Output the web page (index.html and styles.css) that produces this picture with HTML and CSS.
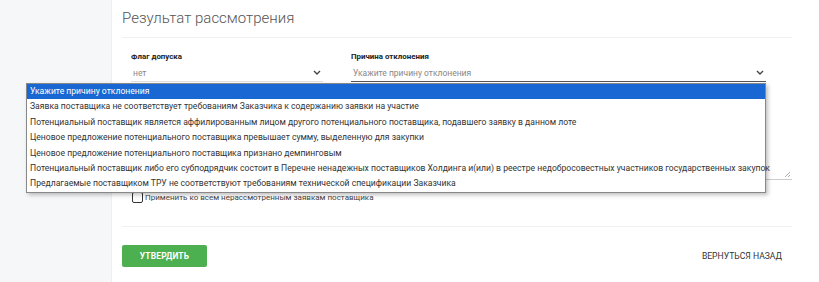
FILE: index.html
```html
<!DOCTYPE html>
<html lang="ru">
<head>
    <meta charset="UTF-8">
    <title>Результат рассмотрения</title>
    <link rel="stylesheet" href="styles.css">
</head>
<body>
<div class="layout">
    <aside class="sidebar"></aside>

    <main class="card">
        <h2 class="card-title">Результат рассмотрения</h2>

        <!-- Форма результата -->
        <div class="form-grid">
            <div class="field">
                <label class="field-label">Флаг допуска</label>
                <div class="select-box">
                    <span class="select-value">нет</span>
                    <svg class="chevron" width="8" height="5" viewBox="0 0 8 5"><path d="M1 1l3 3 3-3" fill="none" stroke="#444" stroke-width="1.4"/></svg>
                </div>
            </div>
            <div class="field">
                <label class="field-label">Причина отклонения</label>
                <div class="select-box select-active">
                    <span class="select-value">Укажите причину отклонения</span>
                    <svg class="chevron" width="8" height="5" viewBox="0 0 8 5"><path d="M1 1l3 3 3-3" fill="none" stroke="#444" stroke-width="1.4"/></svg>
                </div>
                <label class="field-label comment-label">Комментарий</label>
                <div class="textarea-box">
                    <svg class="resize" width="7" height="7" viewBox="0 0 7 7"><path d="M1 6L6 1M4 6L6 4" stroke="#999" stroke-width="0.8"/></svg>
                </div>
            </div>
        </div>

        <label class="check-row">
            <span class="checkbox"></span>
            Применить ко всем нерассмотренным заявкам поставщика
        </label>

        <div class="actions">
            <button class="btn-approve">УТВЕРДИТЬ</button>
            <a class="btn-back" href="#">ВЕРНУТЬСЯ НАЗАД</a>
        </div>
    </main>
</div>

<!-- Открытый список причин -->
<ul class="dropdown">
    <li class="selected">Укажите причину отклонения</li>
    <li>Заявка поставщика не соответствует требованиям Заказчика к содержанию заявки на участие</li>
    <li>Потенциальный поставщик является аффилированным лицом другого потенциального поставщика, подавшего заявку в данном лоте</li>
    <li>Ценовое предложение потенциального поставщика превышает сумму, выделенную для закупки</li>
    <li>Ценовое предложение потенциального поставщика признано демпинговым</li>
    <li>Потенциальный поставщик либо его субподрядчик состоит в Перечне ненадежных поставщиков Холдинга и(или) в реестре недобросовестных участников государственных закупок</li>
    <li>Предлагаемые поставщиком ТРУ не соответствуют требованиям технической спецификации Заказчика</li>
</ul>
</body>
</html>
```

FILE: styles.css
```css
body { margin: 0; font-family: Roboto, "Liberation Sans", sans-serif; background: #fff; color: #333; }
.layout { display: flex; min-height: 282px; }
.sidebar { width: 111px; background: #f6f7f9; flex-shrink: 0; }
.card { flex: 1; border-left: 1px solid #eceef0; padding: 0 27px 0 10px; background: #fff; }
.card-title { font-size: 15px; font-weight: 300; color: #555; margin: 0; padding: 7px 0 8px; line-height: 22px; border-bottom: 1px solid #f0f0f0; }

.form-grid { display: grid; grid-template-columns: 192px 441px; column-gap: 28px; padding: 12px 0 0 9px; }
.field-label { display: block; font-size: 7.9px; font-weight: 700; color: #222; height: 14px; line-height: 14px; }
.select-box { position: relative; display: flex; align-items: center; height: 17px; border-bottom: 1px solid #e2e2e2; font-size: 8.5px; color: #888; padding-left: 2px; }
.select-active { border-bottom-color: #555; margin-right: 26px; }
.chevron { position: absolute; right: 2px; top: 6px; }
.comment-label { margin-top: 14px; }
.textarea-box { position: relative; height: 69px; border-bottom: 1px solid #ccc; }
.resize { position: absolute; right: 1px; bottom: 1px; }

.check-row { display: flex; align-items: center; gap: 2px; font-size: 8px; color: #444; margin: 12px 0 0 10px; }
.checkbox { width: 9px; height: 9px; border: 1.5px solid #333; border-radius: 2px; }

.actions { display: flex; justify-content: space-between; align-items: center; border-top: 1px solid #f0f0f0; margin-top: 23px; padding: 18px 10px 0 0; }
.btn-approve { background: #4caf50; color: #fff; border: none; border-radius: 2px; font-family: inherit; font-size: 8.4px; font-weight: 700; width: 85px; height: 22px; letter-spacing: 0.2px; }
.btn-back { color: #333; font-size: 8.6px; text-decoration: none; }

.dropdown { position: absolute; left: 26px; top: 83px; width: 738px; margin: 0; padding: 0; list-style: none; background: #fff; border: 1px solid #888; box-shadow: 2px 2px 4px rgba(0,0,0,0.25); font-size: 8.6px; color: #333; }
.dropdown li { height: 15.4px; line-height: 15.4px; padding-left: 3px; white-space: nowrap; }
.dropdown .selected { background: #1967d2; color: #fff; }
```
